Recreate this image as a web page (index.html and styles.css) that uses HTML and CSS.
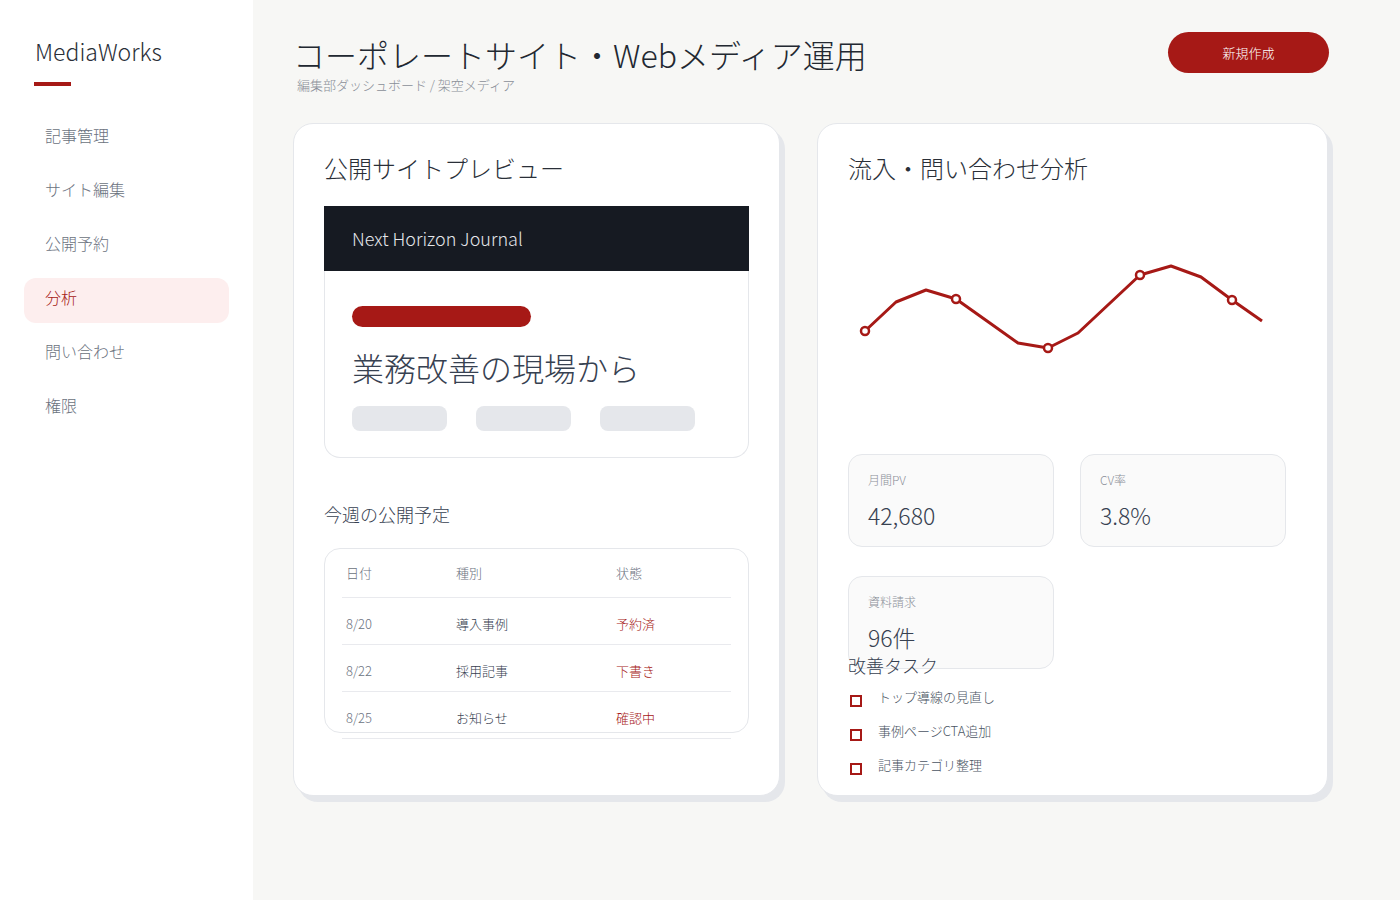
FILE: index.html
```html
<!DOCTYPE html>
<html lang="ja">
<head>
    <meta charset="UTF-8">
    <meta name="viewport" content="width=device-width, initial-scale=1.0">
    <title>MediaWorks - 編集部ダッシュボード</title>
    <link rel="stylesheet" href="styles.css">
</head>
<body>
    <!-- サイドバー -->
    <aside class="sidebar">
        <div class="logo">MediaWorks</div>
        <div class="logo-bar"></div>
        <ul class="nav">
            <li class="nav-item">記事管理</li>
            <li class="nav-item">サイト編集</li>
            <li class="nav-item">公開予約</li>
            <li class="nav-item active">分析</li>
            <li class="nav-item">問い合わせ</li>
            <li class="nav-item">権限</li>
        </ul>
    </aside>

    <main class="main">
        <!-- ヘッダー -->
        <div class="page-head">
            <div>
                <h1 class="page-title">コーポレートサイト・Webメディア運用</h1>
                <div class="page-sub">編集部ダッシュボード / 架空メディア</div>
            </div>
            <button class="btn-new">新規作成</button>
        </div>

        <div class="panels">
            <!-- 公開サイトプレビュー -->
            <section class="panel">
                <h2 class="panel-title">公開サイトプレビュー</h2>
                <div class="preview">
                    <div class="preview-head">Next Horizon Journal</div>
                    <div class="preview-body">
                        <div class="preview-tag"></div>
                        <div class="preview-heading">業務改善の現場から</div>
                        <div class="preview-chips">
                            <span class="chip"></span>
                            <span class="chip"></span>
                            <span class="chip"></span>
                        </div>
                    </div>
                </div>

                <h3 class="sub-title">今週の公開予定</h3>
                <div class="schedule">
                    <table class="schedule-table">
                        <tr>
                            <th class="col-date">日付</th>
                            <th class="col-type">種別</th>
                            <th>状態</th>
                        </tr>
                        <tr>
                            <td class="date">8/20</td>
                            <td>導入事例</td>
                            <td class="status">予約済</td>
                        </tr>
                        <tr>
                            <td class="date">8/22</td>
                            <td>採用記事</td>
                            <td class="status">下書き</td>
                        </tr>
                        <tr>
                            <td class="date">8/25</td>
                            <td>お知らせ</td>
                            <td class="status">確認中</td>
                        </tr>
                    </table>
                </div>
            </section>

            <!-- 流入・問い合わせ分析 -->
            <section class="panel">
                <h2 class="panel-title">流入・問い合わせ分析</h2>
                <svg class="chart" viewBox="0 0 447 250" width="447" height="250">
                    <polyline fill="none" stroke="#a61916" stroke-width="3" stroke-linejoin="round"
                        points="17,137 48,108 78,96 108,105 139,127 170,149 200,154 230,139 261,110 292,81 323,72 353,83 384,106 414,127"/>
                    <g fill="#fff" stroke="#a61916" stroke-width="2.5">
                        <circle cx="17" cy="137" r="4"/>
                        <circle cx="108" cy="105" r="4"/>
                        <circle cx="200" cy="154" r="4"/>
                        <circle cx="292" cy="81" r="4"/>
                        <circle cx="384" cy="106" r="4"/>
                    </g>
                </svg>

                <div class="stats">
                    <div class="stat">
                        <div class="stat-label">月間PV</div>
                        <div class="stat-value">42,680</div>
                    </div>
                    <div class="stat">
                        <div class="stat-label">CV率</div>
                        <div class="stat-value">3.8%</div>
                    </div>
                    <div class="stat">
                        <div class="stat-label">資料請求</div>
                        <div class="stat-value">96件</div>
                    </div>
                </div>

                <h3 class="task-title">改善タスク</h3>
                <ul class="tasks">
                    <li class="task"><span class="check"></span>トップ導線の見直し</li>
                    <li class="task"><span class="check"></span>事例ページCTA追加</li>
                    <li class="task"><span class="check"></span>記事カテゴリ整理</li>
                </ul>
            </section>
        </div>
    </main>
</body>
</html>
```

FILE: styles.css
```css
* {
    box-sizing: border-box;
}
body {
    margin: 0;
    padding: 0;
    font-family: 'Noto Sans CJK JP', 'Noto Sans', sans-serif;
    font-weight: 300;
    background: #f7f7f5;
    color: #2a2f38;
    display: flex;
    min-height: 100vh;
}

/* サイドバー */
.sidebar {
    width: 253px;
    flex-shrink: 0;
    background: #ffffff;
    padding: 35px 24px;
}
.logo {
    font-size: 23px;
    line-height: 32px;
    padding-left: 11px;
    color: #2a2f38;
}
.logo-bar {
    width: 37px;
    height: 4px;
    margin: 15px 0 0 10px;
    background: #a61916;
}
.nav {
    list-style: none;
    margin: 30px 0 0;
    padding: 0;
    display: flex;
    flex-direction: column;
    gap: 9px;
}
.nav-item {
    height: 45px;
    line-height: 39px;
    padding-left: 21px;
    font-size: 16px;
    color: #6b7280;
    border-radius: 12px;
}
.nav-item.active {
    background: #fdeeee;
    color: #a61916;
}

/* メイン */
.main {
    flex: 1;
    padding: 32px 71px 40px 40px;
}
.page-head {
    display: flex;
    justify-content: space-between;
    align-items: flex-start;
}
.page-title {
    margin: 0;
    font-size: 32px;
    line-height: 44px;
    font-weight: 300;
    color: #222831;
}
.page-sub {
    margin: 1px 0 0 4px;
    font-size: 13px;
    line-height: 16px;
    color: #8a8f98;
}
.btn-new {
    width: 161px;
    height: 41px;
    border: none;
    border-radius: 21px;
    background: #a61916;
    color: #ffffff;
    font-family: inherit;
    font-weight: 300;
    font-size: 13px;
    cursor: pointer;
}

.panels {
    margin-top: 30px;
    display: grid;
    grid-template-columns: 487px 511px;
    gap: 37px;
}
.panel {
    height: 673px;
    background: #ffffff;
    border: 1px solid #e5e7eb;
    border-radius: 20px;
    box-shadow: 5px 6px 0 #e5e7eb;
    padding: 27px 30px;
}
.panel-title {
    margin: 0;
    font-size: 24px;
    line-height: 34px;
    font-weight: 300;
    color: #2a2f38;
}

/* プレビュー */
.preview {
    margin-top: 21px;
}
.preview-head {
    height: 65px;
    line-height: 65px;
    padding-left: 28px;
    background: #161a22;
    color: #e5e7eb;
    font-size: 18px;
}
.preview-body {
    border: 1px solid #e5e7eb;
    border-top: none;
    border-radius: 0 0 16px 16px;
    padding: 35px 27px 26px;
}
.preview-tag {
    width: 179px;
    height: 21px;
    border-radius: 11px;
    background: #a61916;
}
.preview-heading {
    margin-top: 19px;
    font-size: 32px;
    line-height: 42px;
    color: #374151;
}
.preview-chips {
    margin-top: 18px;
    display: flex;
    gap: 29px;
}
.chip {
    width: 95px;
    height: 25px;
    border-radius: 8px;
    background: #e5e7eb;
}

/* 公開予定 */
.sub-title {
    margin: 43px 0 0;
    font-size: 18px;
    line-height: 26px;
    font-weight: 300;
    color: #374151;
}
.schedule {
    margin-top: 21px;
    height: 185px;
    border: 1px solid #e5e7eb;
    border-radius: 16px;
    padding: 2px 17px 0;
}
.schedule-table {
    width: 100%;
    border-collapse: collapse;
    font-size: 13px;
}
.schedule-table th,
.schedule-table td {
    text-align: left;
    font-weight: 300;
    padding: 16px 4px 10px;
    line-height: 20px;
    border-bottom: 1px solid #e9eaee;
    color: #374151;
}
.schedule-table th {
    padding: 12px 4px 14px;
    color: #6b7280;
}
.col-date {
    width: 110px;
}
.col-type {
    width: 160px;
}
.schedule-table td.date {
    color: #6b7280;
}
.schedule-table td.status {
    color: #a61916;
}

/* 分析 */
.chart {
    display: block;
    margin: 9px 0 10px;
}
.stats {
    height: 200px;
    display: grid;
    grid-template-columns: 206px 206px;
    grid-auto-rows: 93px;
    column-gap: 26px;
    row-gap: 29px;
}
.stat {
    background: #fafafa;
    border: 1px solid #e5e7eb;
    border-radius: 14px;
    padding: 16px 19px;
}
.stat-label {
    font-size: 12px;
    line-height: 18px;
    color: #8a8f98;
}
.stat-value {
    margin-top: 11px;
    font-size: 23px;
    line-height: 30px;
    color: #374151;
}
.task-title {
    margin: 0;
    font-size: 18px;
    line-height: 22px;
    font-weight: 300;
    color: #374151;
}
.tasks {
    list-style: none;
    margin: 11px 0 0;
    padding: 0 0 0 2px;
    display: flex;
    flex-direction: column;
    gap: 14px;
}
.task {
    display: flex;
    align-items: flex-start;
    gap: 16px;
    font-size: 13px;
    line-height: 20px;
    color: #4b5563;
}
.check {
    width: 12px;
    height: 12px;
    margin-top: 8px;
    border: 2px solid #a61916;
}
```
